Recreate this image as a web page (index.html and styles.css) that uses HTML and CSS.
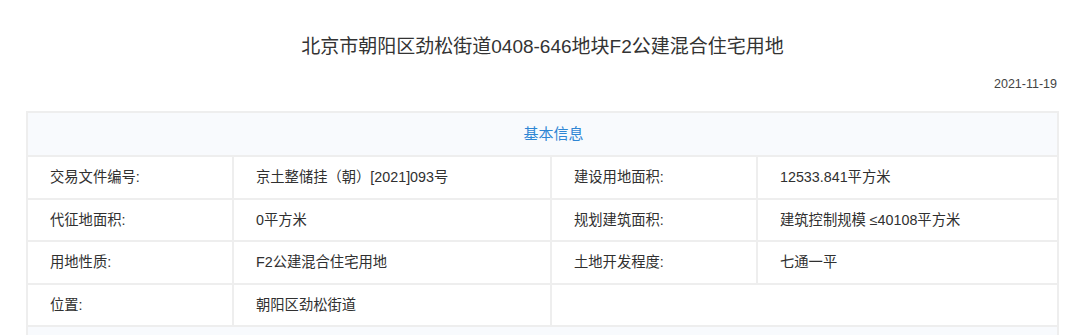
FILE: index.html
```html
<!DOCTYPE html>
<html lang="zh-CN">
<head>
<meta charset="utf-8">
<title>北京市朝阳区劲松街道0408-646地块F2公建混合住宅用地</title>
<link rel="stylesheet" href="styles.css">
</head>
<body>
<div class="page">
  <h1 class="title">北京市朝阳区劲松街道0408-646地块F2公建混合住宅用地</h1>
  <div class="date">2021-11-19</div>
  <table class="info">
    <colgroup>
      <col class="c1"><col class="c2"><col class="c3"><col class="c4">
    </colgroup>
    <thead>
      <tr><th colspan="4" class="sec">基本信息</th></tr>
    </thead>
    <tbody>
      <tr>
        <td class="lbl">交易文件编号:</td><td>京土整储挂（朝）[2021]093号</td>
        <td class="lbl">建设用地面积:</td><td>12533.841平方米</td>
      </tr>
      <tr>
        <td class="lbl">代征地面积:</td><td>0平方米</td>
        <td class="lbl">规划建筑面积:</td><td>建筑控制规模 ≤40108平方米</td>
      </tr>
      <tr>
        <td class="lbl">用地性质:</td><td>F2公建混合住宅用地</td>
        <td class="lbl">土地开发程度:</td><td>七通一平</td>
      </tr>
      <tr>
        <td class="lbl">位置:</td><td>朝阳区劲松街道</td>
        <td colspan="2"></td>
      </tr>
      <tr><td colspan="4" class="sec next"></td></tr>
    </tbody>
  </table>
</div>
</body>
</html>
```

FILE: styles.css
```css
html, body {
  margin: 0;
  padding: 0;
  background: #ffffff;
}
body {
  font-family: "Liberation Sans", "Noto Sans CJK SC", sans-serif;
  color: #333333;
}
.page {
  width: 1031px;
  margin-left: 26px;
  padding-top: 34px;
}
.title {
  margin: 0;
  font-size: 19px;
  font-weight: normal;
  line-height: 26px;
  text-align: center;
  color: #333333;
  padding-left: 2px;
}
.date {
  margin-top: 16px;
  font-size: 12.5px;
  line-height: 16px;
  text-align: right;
  color: #444444;
}
.info {
  margin-top: 19px;
  width: 100%;
  border-collapse: collapse;
  table-layout: fixed;
  font-size: 14.3px;
}
.c1 { width: 206px; }
.c2 { width: 318px; }
.c3 { width: 206px; }
.c4 { width: 301px; }
.info th, .info td {
  border: 2px solid #eeeeee;
  height: 42.5px;
  padding: 0 0 0 22px;
  text-align: left;
  font-weight: normal;
  color: #303030;
  box-sizing: border-box;
  line-height: 20px;
}
.info .sec {
  background: #f8fafd;
  text-align: center;
  padding: 0 0 0 22px;
  font-size: 15px;
  color: #2f86d4;
  height: 44px;
}
```
